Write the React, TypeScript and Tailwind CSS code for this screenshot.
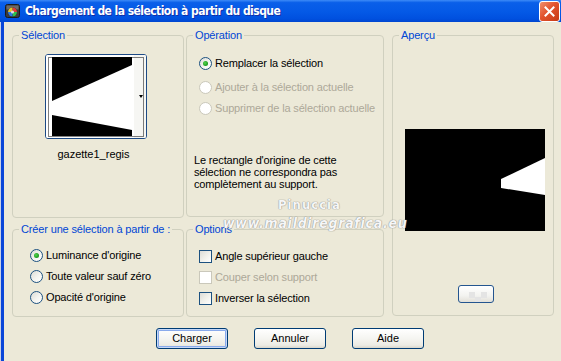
import React from "react";

const FONT = { fontFamily: '"Liberation Sans", Arial, sans-serif' };

function Radio({ checked, disabled, label }: { checked?: boolean; disabled?: boolean; label: string }) {
  return (
    <div className="flex items-center h-[13px] gap-[3px]">
      <span
        className={
          "relative w-[13px] h-[13px] rounded-full border shrink-0 " +
          (disabled
            ? "border-[#cac8bb] bg-white"
            : "border-[#1c5180] bg-[linear-gradient(135deg,#dcdcd5_0%,#f4f4f0_55%,#ffffff_100%)]")
        }
      >
        {checked && (
          <span className="absolute left-[3px] top-[3px] w-[5px] h-[5px] rounded-full bg-[radial-gradient(circle_at_40%_40%,#55d44f_0%,#21a121_60%,#1a8a1a_100%)]" />
        )}
      </span>
      <span className={"text-[11px] leading-[13px] tracking-[-0.15px] whitespace-nowrap " + (disabled ? "text-[#aca899]" : "text-black")}>
        {label}
      </span>
    </div>
  );
}

function Check({ disabled, label }: { disabled?: boolean; label: string }) {
  return (
    <div className="flex items-center h-[13px] gap-[3px]">
      <span
        className={
          "w-[13px] h-[13px] border shrink-0 " +
          (disabled
            ? "border-[#cac8bb] bg-white"
            : "border-[#1c5180] bg-[linear-gradient(135deg,#dcdcd7_0%,#f0f0ea_50%,#ffffff_100%)]")
        }
      />
      <span className={"text-[11px] leading-[13px] tracking-[-0.15px] whitespace-nowrap " + (disabled ? "text-[#aca899]" : "text-black")}>
        {label}
      </span>
    </div>
  );
}

function Group({ title, className, children }: { title: string; className: string; children?: React.ReactNode }) {
  return (
    <fieldset className={"border border-[#d0d0bf] rounded-[4px] m-0 p-0 min-w-0 " + className}>
      <legend className="ml-[6px] px-[2px] text-[11px] leading-[13px] tracking-[-0.15px] text-[#0046d5]">{title}</legend>
      {children}
    </fieldset>
  );
}

function XPButton({ label, focused }: { label: string; focused?: boolean }) {
  return (
    <div
      className={
        "w-[72px] h-[21px] rounded-[3px] border border-[#003c74] flex items-center justify-center text-[11px] text-black bg-[linear-gradient(to_bottom,#ffffff_0%,#f5f5f1_50%,#ecebe4_85%,#d9d6cb_100%)] " +
        (focused ? "shadow-[inset_0_0_0_1px_#c6d8f8,inset_0_0_0_2px_#89aaec]" : "")
      }
    >
      {label}
    </div>
  );
}

export default function App() {
  return (
    <div className="w-[561px] h-[361px] bg-[#ece9d8] flex flex-col overflow-hidden relative" style={FONT}>
      {/* Title bar */}
      <div className="h-[22px] shrink-0 flex items-center bg-[linear-gradient(to_bottom,#3d8bf7_0%,#0a5fe9_12%,#0459e6_55%,#0050df_85%,#0046d0_100%)] pl-[5px] relative">
        <svg width="16" height="16" viewBox="0 0 16 16" className="shrink-0">
          <rect x="0.5" y="1.5" width="14" height="13" rx="2" fill="#3a3a3a" stroke="#1a1a1a" />
          <rect x="1.5" y="2.5" width="12" height="4" fill="#6a6a6a" />
          <circle cx="7.5" cy="9" r="4.5" fill="#111" />
          <path d="M7.5 4.5 A4.5 4.5 0 0 1 12 9 L7.5 9 Z" fill="#e23b3b" />
          <path d="M12 9 A4.5 4.5 0 0 1 7.5 13.5 L7.5 9 Z" fill="#2fc24a" />
          <path d="M7.5 13.5 A4.5 4.5 0 0 1 3 9 L7.5 9 Z" fill="#2f7ae3" />
          <path d="M3 9 A4.5 4.5 0 0 1 7.5 4.5 L7.5 9 Z" fill="#e3c52f" />
          <circle cx="7.5" cy="9" r="1.6" fill="#ddd" />
        </svg>
        <span
          className="ml-[4px] text-white font-bold text-[12px] leading-[16px] whitespace-nowrap tracking-[-0.55px] [text-shadow:1px_1px_0_#0f2fa8]"
          style={{ fontFamily: '"Liberation Sans Narrow", "DejaVu Sans Condensed", "Liberation Sans", sans-serif' }}
        >
          Chargement de la sélection à partir du disque
        </span>
        <div className="absolute right-[1px] top-[1px] w-[21px] h-[21px] rounded-[3px] border border-white bg-[linear-gradient(135deg,#f0906e_0%,#e2532e_45%,#c73a14_100%)] flex items-center justify-center">
          <svg width="11" height="11" viewBox="0 0 11 11">
            <path d="M1.5 1.5 L9.5 9.5 M9.5 1.5 L1.5 9.5" stroke="#fff" strokeWidth="2" strokeLinecap="square" />
          </svg>
        </div>
      </div>

      {/* Body */}
      <div className="flex-1 flex relative">
        <div className="w-[1px] bg-[#c8d0e6] shrink-0" />
        <div className="w-[3px] bg-[#0a46d9] shrink-0" />
        <div className="flex flex-col pl-[8px] pt-[7px]">
          <div className="flex">
            <div className="flex flex-col w-[372px]">
              <div className="flex gap-[2px]">
                <Group title="Sélection" className="w-[172px] h-[189px]">
                  <div className="pl-[32px] pt-[12px]">
                    <div className="w-[102px] h-[85px] rounded-[3px] border border-[#1d4a85] bg-white overflow-hidden">
                      <svg width="100" height="83" viewBox="0 0 100 83" className="block">
                        <rect x="0" y="0" width="100" height="83" fill="#ffffff" />
                        <rect x="88" y="0" width="12" height="83" fill="#f6f6f3" />
                        <rect x="6" y="2" width="80" height="79" fill="#000" />
                        <polygon points="6,46 86,10 86,75 6,60" fill="#fff" />
                        <rect x="2.5" y="2.5" width="95" height="79" fill="none" stroke="#000" strokeDasharray="1 1" />
                        <polygon points="93,40 97,40 95,43" fill="#000" />
                      </svg>
                    </div>
                    <div className="w-[97px] mt-[9px] text-center text-[11px] leading-[13px] text-black">gazette1_regis</div>
                  </div>
                </Group>
                <Group title="Opération" className="w-[198px] h-[188px]">
                  <div className="pl-[12px] pt-[15px] flex flex-col">
                    <Radio checked label="Remplacer la sélection" />
                    <div className="mt-[11px]">
                      <Radio disabled label="Ajouter à la sélection actuelle" />
                    </div>
                    <div className="mt-[8px]">
                      <Radio disabled label="Supprimer de la sélection actuelle" />
                    </div>
                    <p className="mt-[39px] -ml-[5px] text-[11px] leading-[12px] tracking-[-0.15px] text-black">
                      Le rectangle d'origine de cette
                      <br />
                      sélection ne correspondra pas
                      <br />
                      complètement au support.
                    </p>
                  </div>
                </Group>
              </div>
              <div className="flex gap-[2px] mt-[5px]">
                <Group title="Créer une sélection à partir de :" className="w-[172px] h-[94px]">
                  <div className="pl-[17px] pt-[13px] flex flex-col gap-[8px]">
                    <Radio checked label="Luminance d'origine" />
                    <Radio label="Toute valeur sauf zéro" />
                    <Radio label="Opacité d'origine" />
                  </div>
                </Group>
                <Group title="Options" className="w-[198px] h-[94px]">
                  <div className="pl-[12px] pt-[14px] flex flex-col gap-[8px]">
                    <Check label="Angle supérieur gauche" />
                    <Check disabled label="Couper selon support" />
                    <Check label="Inverser la sélection" />
                  </div>
                </Group>
              </div>
            </div>
            <Group title="Aperçu" className="ml-[8px] w-[162px] h-[287px]">
              <div className="pl-[12px] pt-[87px]">
                <svg width="140" height="102" viewBox="0 0 140 102" className="block">
                  <rect width="140" height="102" fill="#000" />
                  <polygon points="96,50 140,29 140,66 96,59" fill="#fff" />
                </svg>
                <div className="ml-[53px] mt-[54px] w-[36px] h-[18px] rounded-[3px] border border-[#24558f] bg-[linear-gradient(to_bottom,#ffffff_0%,#f3f3f0_60%,#e2e0d8_100%)] relative overflow-hidden">
                  <div className="absolute left-[10px] top-[6px] w-[6px] h-[6px] bg-[#e4e4e4]" />
                  <div className="absolute left-[16px] top-[11px] w-[6px] h-[6px] bg-[#e4e4e4]" />
                  <div className="absolute left-[22px] top-[6px] w-[6px] h-[6px] bg-[#e4e4e4]" />
                </div>
              </div>
            </Group>
          </div>
          <div className="flex gap-[26px] ml-[144px] mt-[11px]">
            <XPButton label="Charger" focused />
            <XPButton label="Annuler" />
            <XPButton label="Aide" />
          </div>
        </div>

        {/* Watermark overlay */}
        <div
          className="absolute left-[278px] top-[173px] text-[13px] font-bold text-[#f6f6f6] [text-shadow:0_0_1px_#8a8a8a,0_0_1px_#8a8a8a] tracking-[1px]"
          style={{ fontFamily: '"DejaVu Sans Condensed", "Liberation Sans", sans-serif' }}
        >
          Pinuccia
        </div>
        <div
          className="absolute left-[223px] top-[195px] text-[14px] leading-[12px] font-bold italic text-[#f6f6f6] [text-shadow:0_0_1px_#8a8a8a,0_0_1px_#8a8a8a] whitespace-nowrap tracking-[0.7px]"
          style={{ fontFamily: '"DejaVu Sans Condensed", "Liberation Sans", sans-serif' }}
        >
          www.maildiregrafica.eu
        </div>
      </div>
    </div>
  );
}
